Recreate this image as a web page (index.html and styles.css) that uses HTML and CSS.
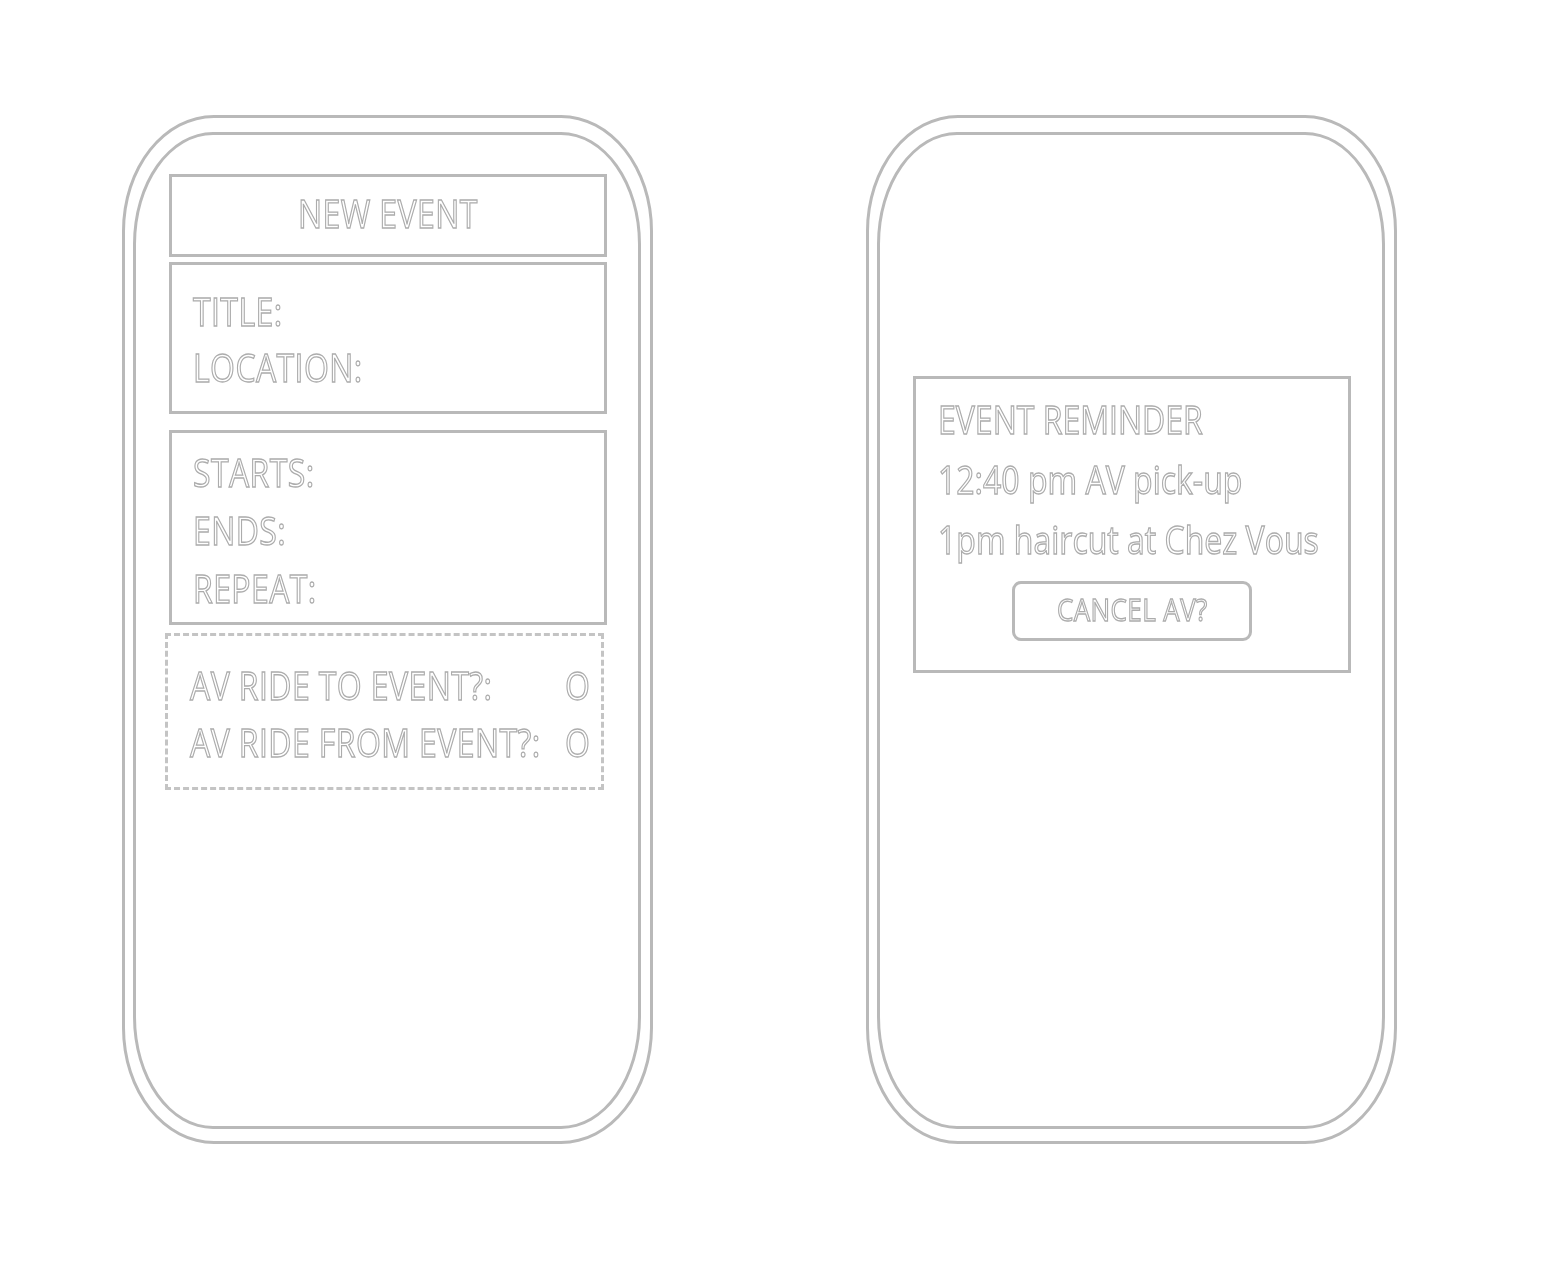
FILE: index.html
```html
<!DOCTYPE html>
<html lang="en">

<head>
    <link rel="stylesheet" href="styles.css">
</head>

<body>
    <div class="sheet">
        <div class="phone">
            <div class="screen new-event">
                <div class="panel panel-head">
                    <span class="txt">NEW EVENT</span>
                </div>
                <div class="panel panel-basic">
                    <div class="line"><span class="txt">TITLE:</span></div>
                    <div class="line"><span class="txt">LOCATION:</span></div>
                </div>
                <div class="panel panel-time">
                    <div class="line"><span class="txt">STARTS:</span></div>
                    <div class="line"><span class="txt">ENDS:</span></div>
                    <div class="line"><span class="txt">REPEAT:</span></div>
                </div>
                <div class="panel panel-av">
                    <div class="line toggle-row">
                        <span class="txt">AV RIDE TO EVENT?:</span>
                        <span class="txt toggle">O</span>
                    </div>
                    <div class="line toggle-row">
                        <span class="txt">AV RIDE FROM EVENT?:</span>
                        <span class="txt toggle">O</span>
                    </div>
                </div>
            </div>
        </div>

        <div class="phone">
            <div class="screen reminder">
                <div class="panel panel-reminder">
                    <div class="line"><span class="txt">EVENT REMINDER</span></div>
                    <div class="line"><span class="txt">12:40 pm AV pick-up</span></div>
                    <div class="line"><span class="txt">1pm haircut at Chez Vous</span></div>
                    <div class="cancel-button">
                        <span class="txt">CANCEL AV?</span>
                    </div>
                </div>
            </div>
        </div>
    </div>
</body>

</html>
```

FILE: styles.css
```css
body {
    margin: 0;
    background-color: #fff;
    font-family: "Open Sans", "DejaVu Sans", sans-serif;
}

.sheet {
    display: flex;
    gap: 213px;
    padding: 115px 0 0 122px;
}

/* phone outline: two nested rounded frames */
.phone {
    box-sizing: border-box;
    width: 531px;
    height: 1029px;
    border: 3px solid #b9b9b9;
    border-radius: 92px / 116px;
    padding: 14px 9px 12px 8px;
    display: flex;
}

.screen {
    flex: 1;
    border: 3px solid #b9b9b9;
    border-radius: 80px / 112px;
    display: flex;
    flex-direction: column;
}

.new-event {
    padding: 39px 31px 0 33px;
}

.reminder {
    padding: 241px 31px 0 33px;
}

/* hollow outlined lettering */
.txt {
    display: inline-block;
    color: #fff;
    -webkit-text-stroke: 1.1px #acacac;
    font-size: 32px;
    letter-spacing: 0.4px;
    white-space: nowrap;
    transform: scaleY(1.2);
    transform-origin: 0 calc(50% + 12px);
    will-change: transform;
}

.line {
    display: flex;
}

.panel {
    box-sizing: border-box;
    border: 3px solid #b9b9b9;
}

.panel-head {
    height: 83px;
    line-height: 77px;
    display: flex;
    justify-content: center;
}

.panel-head .txt {
    transform-origin: 50% calc(50% + 12px);
}

.panel-basic {
    margin-top: 5px;
    height: 152px;
    padding: 21px 0 0 21px;
    line-height: 56px;
}

.panel-time {
    margin-top: 16px;
    height: 195px;
    padding: 13px 0 0 21px;
    line-height: 58px;
}

.panel-av {
    margin: 8px 3px 0 -4px;
    height: 157px;
    padding: 23px 11px 0 22px;
    border-style: dashed;
    border-color: #c4c4c4;
    line-height: 57px;
}

.toggle-row {
    justify-content: space-between;
}

.toggle {
    transform-origin: 50% calc(50% + 12px);
}

.panel-reminder {
    height: 297px;
    padding: 13px 0 0 22px;
    line-height: 60px;
}

.panel-reminder .line .txt {
    letter-spacing: 0;
}

.cancel-button {
    box-sizing: border-box;
    width: 240px;
    height: 60px;
    margin: 9px 0 0 74px;
    border: 3px solid #b9b9b9;
    border-radius: 9px;
    line-height: 54px;
    display: flex;
    justify-content: center;
}

.cancel-button .txt {
    font-size: 26px;
    transform-origin: 50% calc(50% + 10px);
}
```
